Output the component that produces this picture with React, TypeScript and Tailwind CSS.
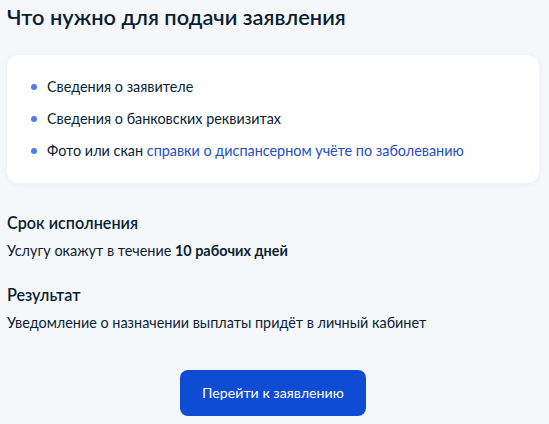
export default function App() {
  const items = ['Сведения о заявителе', 'Сведения о банковских реквизитах']
  return (
    <div className="min-h-[424px] w-[549px] bg-[#f5f7fb] pl-[7px] pr-[10px] font-['Lato',sans-serif] text-[#0b1f33]">
      <h2 className="pt-[3px] text-[21.8px] leading-[28px] font-semibold">Что нужно для подачи заявления</h2>
      <div className="mt-[24px] flex flex-col gap-3 rounded-xl bg-white px-6 py-[22px] shadow-[0_1px_6px_rgba(39,62,110,0.06)]">
        {items.map((t) => (
          <div key={t} className="flex items-center gap-[10px] text-[14.4px] leading-5">
            <span className="h-[6px] w-[6px] rounded-full bg-[#4d7ee8]" />
            <span>{t}</span>
          </div>
        ))}
        <div className="flex items-center gap-[10px] text-[14.4px] leading-5">
          <span className="h-[6px] w-[6px] rounded-full bg-[#4d7ee8]" />
          <span>
            Фото или скан <a className="text-[#2450c4]">справки о диспансерном учёте по заболеванию</a>
          </span>
        </div>
      </div>
      <h3 className="mt-[28px] text-[16.2px] leading-6 font-semibold">Срок исполнения</h3>
      <p className="mt-[6px] text-[14.4px] leading-5">
        Услугу окажут в течение <b className="font-bold">10 рабочих дней</b>
      </p>
      <h3 className="mt-[22px] text-[16.2px] leading-6 font-semibold">Результат</h3>
      <p className="mt-[6px] text-[14.4px] leading-5">Уведомление о назначении выплаты придёт в личный кабинет</p>
      <div className="mt-[37px] flex justify-center">
        <button className="h-[46px] w-[186px] rounded-lg bg-[#0d4cd3] text-[14.2px] text-white">Перейти к заявлению</button>
      </div>
    </div>
  )
}
